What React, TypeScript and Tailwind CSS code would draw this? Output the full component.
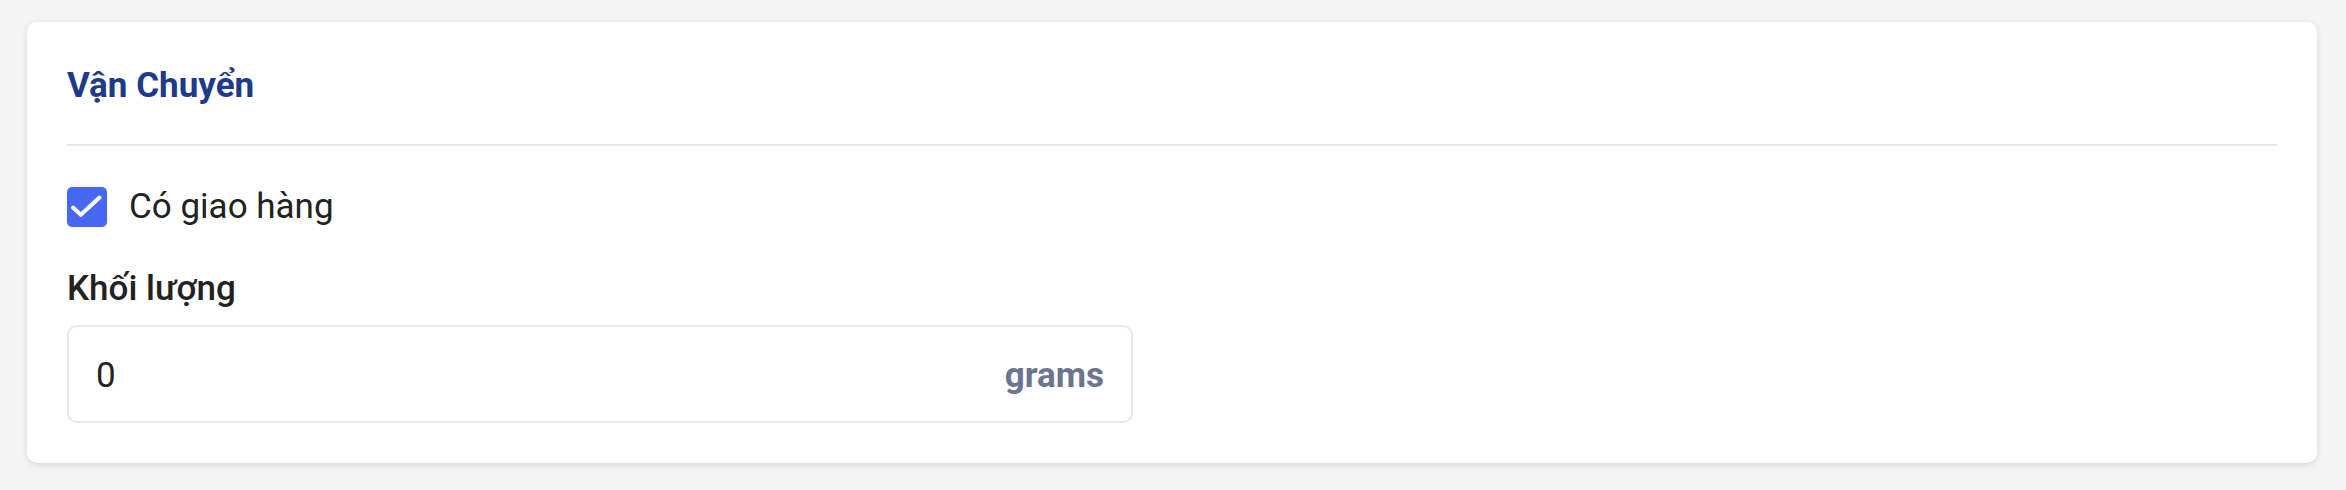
export default function App() {
  return (
    <main className="min-h-[490px] bg-[#f4f4f4] px-[27px] pt-[22px] font-['Roboto',sans-serif]">
      <section className="w-[2290px] rounded-[10px] bg-white px-[40px] pb-[40px] pt-[44px] shadow-[0_2px_6px_rgba(0,0,0,0.12)]">
        <h2 className="pb-[38px] text-[35px] font-bold leading-[40px] text-[#1e3a8a]">Vận Chuyển</h2>
        <div className="h-[2px] bg-[#e9e9e9]" />

        <label className="mt-[41px] flex items-start gap-[22px]">
          <span className="flex h-[40px] w-[40px] shrink-0 items-center justify-center rounded-[5px] bg-[#4767f6]">
            <svg viewBox="0 0 40 40" className="h-[40px] w-[40px]" fill="none">
              <path d="M6 20.5 L13.8 27.8 L32.5 10.5" stroke="white" strokeWidth="4" strokeLinecap="round" strokeLinejoin="round" />
            </svg>
          </span>
          <span className="mt-[1px] text-[35px] leading-[38px] text-[#222]">Có giao hàng</span>
        </label>

        <p className="mt-[42px] text-[35px] font-medium leading-[40px] text-[#222]">Khối lượng</p>

        <div className="mt-[16px] flex h-[98px] w-[1066px] items-center justify-between rounded-[10px] border-2 border-[#e6e8ec] px-[27px] pt-[3px]">
          <span className="text-[35px] leading-[40px] text-[#222]">0</span>
          <span className="text-[35px] font-bold leading-[40px] text-[#6b7590]">grams</span>
        </div>
      </section>
    </main>
  );
}
